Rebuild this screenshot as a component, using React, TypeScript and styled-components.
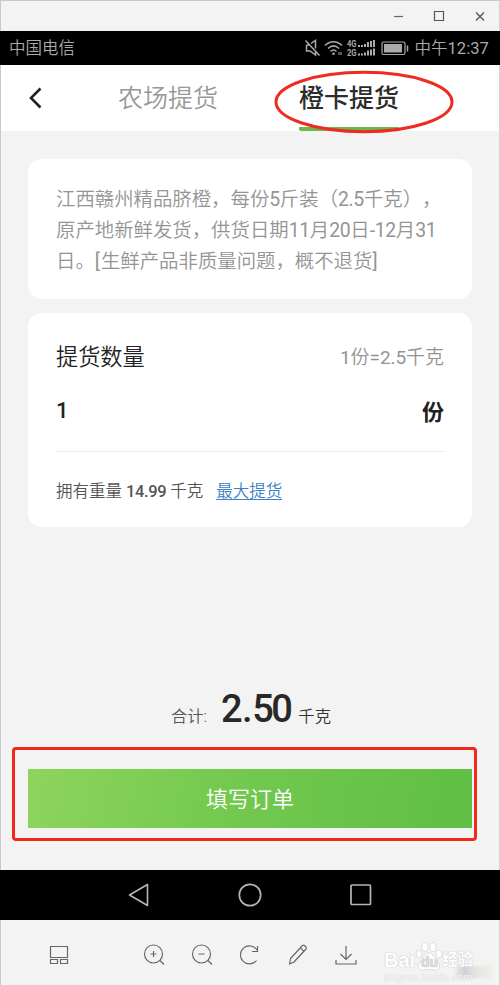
import React from 'react';
import styled, { createGlobalStyle } from 'styled-components';

const GlobalStyle = createGlobalStyle`
  * { box-sizing: border-box; }
  body { margin: 0; background: #f3f3f3; }
  button { font: inherit; border: 0; padding: 0; background: none; color: inherit; }
`;

const Window = styled.div`
  position: relative;
  width: 500px;
  height: 985px;
  display: flex;
  flex-direction: column;
  overflow: hidden;
  background: #f3f3f3;
  box-shadow: inset 1px 1px 0 #c9c9c9, inset -1px 0 0 #d4d4d4;
  font-family: Roboto, 'Noto Sans CJK SC', sans-serif;
  white-space: nowrap;
`;

const TitleBar = styled.header`
  flex: none;
  height: 31px;
  display: flex;
  justify-content: flex-end;
  align-items: center;
  padding: 0 14px 0 0;
  gap: 30px;
`;

const Icon = styled.svg`
  display: block;
  flex: none;
  overflow: visible;
  fill: none;
`;

const StatusBar = styled.div`
  flex: none;
  height: 34px;
  padding: 2px 11px 0 9px;
  display: flex;
  align-items: center;
  justify-content: space-between;
  background: #000;
  color: #aaa;
  font-size: 16.5px;
  font-weight: 350;
  line-height: 32px;
`;

const StatusIcons = styled.div`
  display: flex;
  align-items: center;
`;

const StatusGlyphs = styled(Icon)`
  margin-top: -2px;
`;

const Clock = styled.span`
  margin-left: 5px;
`;

const Num = styled.span<{ $tight?: number }>`
  font-weight: 400;
  letter-spacing: ${({ $tight = 0.35 }) => -$tight}px;
`;

const TabBar = styled.nav`
  flex: none;
  height: 66px;
  margin: 0 1px;
  background: #fff;
  display: flex;
  align-items: stretch;
`;

const BackButton = styled.button`
  width: 117px;
  padding-left: 27px;
  display: flex;
  align-items: center;
`;

const Tab = styled.button<{ $active?: boolean }>`
  width: 100px;
  margin-right: 81px;
  font-size: 25px;
  line-height: 68px;
  font-weight: ${({ $active }) => ($active ? 500 : 350)};
  color: ${({ $active }) => ($active ? '#2c2c2c' : '#999')};
  border-bottom: ${({ $active }) => ($active ? '4px solid #6cb84e' : '0')};
  border-radius: 2px;
  display: flex;
  align-items: flex-start;
`;

const Content = styled.main`
  flex: none;
  height: 739px;
  padding: 28px 28px 0;
  display: flex;
  flex-direction: column;
`;

const Card = styled.section<{ $height: number }>`
  flex: none;
  height: ${({ $height }) => $height}px;
  margin-bottom: 14px;
  padding: 0 28px;
  border-radius: 14px;
  background: #fff;
`;

const Notice = styled.p`
  margin: 0;
  padding-top: 25px;
  font-size: 19.4px;
  line-height: 31px;
  font-weight: 350;
  color: #949494;
  text-spacing-trim: space-all;
`;

const Row = styled.div<{ $height: number; $lift?: number }>`
  height: ${({ $height }) => $height}px;
  padding-bottom: ${({ $lift = 0 }) => $lift}px;
  display: flex;
  align-items: center;
  justify-content: space-between;
`;

const Heading = styled.h2`
  margin: 0;
  font-size: 22.2px;
  font-weight: 350;
  color: #222;
`;

const Ratio = styled.span`
  font-size: 19px;
  font-weight: 350;
  color: #949494;
`;

const Amount = styled.span<{ $bold?: boolean }>`
  font-size: 22px;
  font-weight: ${({ $bold }) => ($bold ? 700 : 500)};
  color: #222;
`;

const Balance = styled.div`
  height: 74px;
  border-top: 1px solid #ebebeb;
  padding-top: 2px;
  display: flex;
  align-items: center;
  gap: 13px;
  font-size: 16.5px;
  font-weight: 350;
  color: #555;
`;

const Weight = styled(Num)`
  font-weight: 500;
`;

const MaxLink = styled.a`
  color: #3d7fc4;
  text-decoration: underline;
  text-decoration-thickness: 1px;
  text-underline-offset: 2px;
`;

const Total = styled.div`
  margin-top: 138px;
  height: 60px;
  padding-left: 143px;
  display: flex;
  align-items: baseline;
  line-height: 60px;
  font-size: 16.3px;
  font-weight: 350;
  color: #555;
`;

const TotalValue = styled.strong`
  margin: 0 8px 0 14px;
  font-size: 38px;
  font-weight: 500;
  letter-spacing: -2.5px;
  color: #282828;
`;

const Point = styled.span`
  margin: 0 2px;
`;

const Unit = styled.span`
  color: #333;
`;

const Submit = styled.button`
  flex: none;
  height: 59px;
  width: 444px;
  margin-top: 30px;
  background: linear-gradient(100deg, #8dd45e, #74c94f 45%, #5fbe45);
  color: #fff;
  font-size: 22px;
  font-weight: 350;
  line-height: 61px;
  text-align: center;
`;

const AndroidNav = styled.div`
  flex: none;
  height: 50px;
  background: #000;
  display: flex;
  align-items: center;
  justify-content: center;
  gap: 88px;
`;

const Toolbar = styled.footer`
  flex: 1;
  display: flex;
  align-items: center;
  padding: 5px 0 0 47px;
`;

const ToolGroup = styled.div`
  display: flex;
  align-items: center;
  gap: 24px;
  margin-left: 71px;
`;

const EllipseMark = styled(Icon)`
  position: absolute;
  left: 274px;
  top: 70px;
`;

const BoxMark = styled.div`
  position: absolute;
  left: 12px;
  top: 747px;
  width: 465px;
  height: 94px;
  border: 3px solid #f1281c;
  border-radius: 4px;
`;

const Watermark = styled.div`
  position: absolute;
  left: 384px;
  top: 939px;
  width: 112px;
  height: 46px;
  color: #fff;
  font-family: 'Liberation Sans', 'Noto Sans CJK SC', sans-serif;
  text-shadow: 0 0 1px #bbb, 0 0 1px #ccc;
`;

const WatermarkLogo = styled.div`
  display: flex;
  align-items: flex-end;
  height: 32px;
  font-size: 20px;
  font-weight: 700;
  line-height: 22px;
`;

const WatermarkCjk = styled.span`
  font-size: 15.5px;
`;

const WatermarkUrl = styled.div`
  font-size: 11px;
  line-height: 13px;
  color: #f3f3f3;
  text-shadow: 0 0 1px #ccc;
`;

const Smudge = styled.div`
  position: absolute;
  left: 455px;
  top: 966px;
  width: 38px;
  height: 12px;
  background: linear-gradient(90deg, #e4e4e488, #d0cfd6 25%, #e0dfe3 45%, #eae7df 65%, #efefef);
  filter: blur(1px);
`;

const SignalBars = ({ y }: { y: number }) => (
  <>
    {[2, 2, 3, 5, 6, 7].map((h, i) => (
      <rect key={i} x={10 + i * 3} y={y - h} width={2} height={h} />
    ))}
  </>
);

const Magnifier = ({ plus }: { plus?: boolean }) => (
  <Icon width="24" height="24" stroke="#666" strokeWidth="1.15">
    <circle cx="11.5" cy="11" r="9" />
    <path d={`M18 17.5 22 21.5M8.500 11h6${plus ? 'M11.5 8v6' : ''}`} />
  </Icon>
);

export default function App() {
  return (
    <>
      <GlobalStyle />
      <Window>
        <TitleBar>
          <Icon width="10" height="12" stroke="#666" strokeWidth="1.2"><path d="M0 6.500h9" /></Icon>
          <Icon width="11" height="12" stroke="#555" strokeWidth="1.2"><path d="M.5 1.5h9v9h-9z" /></Icon>
          <Icon width="11" height="12" stroke="#555" strokeWidth="1.4"><path d="M1 2.500l8 8M9 2.500l-8 8" /></Icon>
        </TitleBar>
        <StatusBar>
          <span>中国电信</span>
          <StatusIcons>
            <StatusGlyphs width="106" height="20" stroke="#aaa" strokeWidth="1.5">
              <path d="M3.500 7v6h3.500l5.500 4v-3M8 5.500l4.500-3v8M3.500 7h3M2.500 2.500l14 15" />
              <g transform="translate(21 2)">
                <path d="M1 5.500c5-5 12-5 17 0M4 8.500c3.500-3.500 7.500-3.500 11 0M6.500 11.500c2-2 4-2 6 0" />
                <circle cx="9.500" cy="13.800" r="1.300" fill="#aaa" stroke="none" />
                <path d="M15 12v3M17 12v3" strokeWidth="1" />
              </g>
              <g transform="translate(45 1)" fill="#aaa" stroke="none">
                <text x="-1" y="8" fontSize="9" fontWeight="700" textLength="9.5" lengthAdjust="spacingAndGlyphs">4G</text>
                <text x="-1" y="16.500" fontSize="9" fontWeight="700" textLength="9.5" lengthAdjust="spacingAndGlyphs">2G</text>
                <SignalBars y={8} />
                <SignalBars y={16.5} />
              </g>
              <rect x="79" y="4" width="23" height="12.500" rx="1.500" strokeWidth="1.200" />
              <path d="M104.500 7.500v6" />
              <path d="M81 6h18v8.500H81z" fill="#aaa" stroke="none" />
            </StatusGlyphs>
            <Clock>中午<Num $tight={-0.1}>12:37</Num></Clock>
          </StatusIcons>
        </StatusBar>
        <TabBar>
          <BackButton aria-label="返回">
            <Icon width="14" height="22" stroke="#222" strokeWidth="2.6"><path d="M12.500 1.500 3 11 12.500 20.500" /></Icon>
          </BackButton>
          <Tab>农场提货</Tab>
          <Tab $active>橙卡提货</Tab>
        </TabBar>
        <Content>
          <Card $height={140}>
            <Notice>
              江西赣州精品脐橙，每份<Num>5</Num>斤装（<Num>2.5</Num>千克），<br />
              原产地新鲜发货，供货日期<Num>11</Num>月<Num>20</Num>日<Num>-12</Num>月<Num>31</Num><br />
              日。<Num $tight={-1}>[</Num>生鲜产品非质量问题，概不退货<Num>]</Num>
            </Notice>
          </Card>
          <Card $height={214}>
            <Row $height={84}>
              <Heading>提货数量</Heading>
              <Ratio><Num $tight={0.1}>1</Num>份<Num $tight={0.1}>=2.5</Num>千克</Ratio>
            </Row>
            <Row $height={54} $lift={28}>
              <Amount>1</Amount>
              <Amount $bold>份</Amount>
            </Row>
            <Balance>
              <span>拥有重量 <Weight $tight={0.4}>14.99</Weight> 千克</span>
              <MaxLink>最大提货</MaxLink>
            </Balance>
          </Card>
          <Total>
            合计: <TotalValue>2<Point>.</Point>50</TotalValue><Unit>千克</Unit>
          </Total>
          <Submit>填写订单</Submit>
        </Content>
        <AndroidNav>
          <Icon width="22" height="24" stroke="#b5b5b5" strokeWidth="1.6" strokeLinejoin="round"><path d="M1.500 12 19.500 1.500v21z" /></Icon>
          <Icon width="24" height="24" stroke="#b5b5b5" strokeWidth="1.700"><circle cx="12" cy="12" r="10.700" /></Icon>
          <Icon width="22" height="22" stroke="#b5b5b5" strokeWidth="1.700"><rect x="1" y="1" width="19.500" height="19.500" rx="1" /></Icon>
        </AndroidNav>
        <Toolbar>
          <Icon width="24" height="24" stroke="#666" strokeWidth="1.200">
            <path d="M3.500 3.500h17v11h-17zM3.500 16.500h7v4h-7zM13.500 16.500h7v4h-7z" />
          </Icon>
          <ToolGroup>
            <Magnifier plus />
            <Magnifier />
            <Icon width="24" height="24" stroke="#666" strokeWidth="1.150">
              <path d="M18.500 17.500A9 9 0 1 1 19 7M19.500 3v5.500h-5.500" />
            </Icon>
            <Icon width="24" height="24" stroke="#666" strokeWidth="1.150" strokeLinejoin="round">
              <path d="M3.500 21 4.500 15.500 16.500 2.500Q17.500 1.800 18.500 2.500L20 4Q20.700 5 20 6L8 19zM14.500 4.800l3.500 3.500" />
            </Icon>
            <Icon width="24" height="24" stroke="#666" strokeWidth="1.200">
              <path d="M12 3v13M6.500 11l5.500 5.500 5.500-5.500M2 17v4h20v-4" />
            </Icon>
          </ToolGroup>
        </Toolbar>
        <EllipseMark width="180" height="64" stroke="#ee2b20" strokeWidth="3">
          <ellipse cx="90" cy="32" rx="88" ry="29.700" />
        </EllipseMark>
        <BoxMark />
        <Smudge />
        <Watermark>
          <WatermarkLogo>
            <span>Bai</span>
            <Icon width="27" height="30" fill="#fff" stroke="#d0d0d0" strokeWidth=".7">
              <g fill="#fff">
                <ellipse cx="4" cy="13" rx="3" ry="4" />
                <ellipse cx="10" cy="6" rx="3" ry="4.500" />
                <ellipse cx="18" cy="6" rx="3" ry="4.500" />
                <ellipse cx="24" cy="13" rx="3" ry="4" />
                <path d="M14 12c4 0 5 5 9 9 4 5 0 9-4 8-3-1-7-1-10 0-5 1-8-4-4-8 4-4 5-9 9-9z" />
              </g>
              <text x="6" y="26" fontSize="14" fill="#dcdcdc" stroke="none">du</text>
            </Icon>
            <WatermarkCjk>经验</WatermarkCjk>
          </WatermarkLogo>
          <WatermarkUrl>jingyan.baidu.com</WatermarkUrl>
        </Watermark>
      </Window>
    </>
  );
}
